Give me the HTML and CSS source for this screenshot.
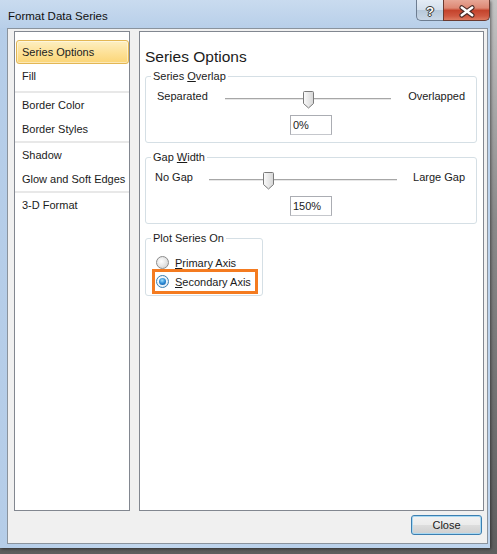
FILE: index.html
```html
<!DOCTYPE html>
<html>
<head>
<meta charset="utf-8">
<title>Format Data Series</title>
<link rel="stylesheet" href="styles.css">
</head>
<body>
<div class="window">
  <div class="titlebar">
    <span class="title">Format Data Series</span>
    <div class="caption-btns">
      <div class="cbtn help"><span class="help-glyph">?</span></div>
      <div class="cbtn close">
        <svg width="47" height="21" viewBox="0 0 47 21">
          <path d="M18.5 8.5 L29.5 16.5 M29.5 8.5 L18.5 16.5" stroke="#4a2b27" stroke-width="5" stroke-linecap="round" fill="none"/>
          <path d="M18.5 8.5 L29.5 16.5 M29.5 8.5 L18.5 16.5" stroke="#ffffff" stroke-width="2.6" stroke-linecap="round" fill="none"/>
        </svg>
      </div>
    </div>
  </div>
  <div class="client">
    <div class="panes">
      <ul class="nav">
        <li class="item active">Series Options</li>
        <li class="item">Fill</li>
        <li class="sep first"></li>
        <li class="item">Border Color</li>
        <li class="item">Border Styles</li>
        <li class="sep"></li>
        <li class="item">Shadow</li>
        <li class="item">Glow and Soft Edges</li>
        <li class="sep"></li>
        <li class="item">3-D Format</li>
      </ul>
      <div class="content">
        <h1 class="heading">Series Options</h1>
        <fieldset class="group">
          <legend>Series <u>O</u>verlap</legend>
          <div class="slider-row overlap">
            <span class="lbl">Separated</span>
            <div class="slider">
              <div class="track"></div>
              <svg class="thumb" style="left: 50%" width="11" height="18" viewBox="0 0 11 18">
                <defs><linearGradient id="tg1" x1="0" y1="0" x2="1" y2="0"><stop offset="0" stop-color="#fbfbfb"/><stop offset="1" stop-color="#d6d6d6"/></linearGradient></defs>
                <path d="M1.5 0.5 H9.5 Q10.5 0.5 10.5 1.5 V12.5 L5.5 17 L0.5 12.5 V1.5 Q0.5 0.5 1.5 0.5 Z" fill="url(#tg1)" stroke="#7a7a7a"/>
              </svg>
            </div>
            <span class="lbl right">Overlapped</span>
          </div>
          <div class="field-row"><div class="textbox">0%</div></div>
        </fieldset>
        <fieldset class="group">
          <legend>Gap <u>W</u>idth</legend>
          <div class="slider-row gap">
            <span class="lbl">No Gap</span>
            <div class="slider">
              <div class="track"></div>
              <svg class="thumb" style="left: 31.4%" width="11" height="18" viewBox="0 0 11 18">
                <defs><linearGradient id="tg2" x1="0" y1="0" x2="1" y2="0"><stop offset="0" stop-color="#fbfbfb"/><stop offset="1" stop-color="#d6d6d6"/></linearGradient></defs>
                <path d="M1.5 0.5 H9.5 Q10.5 0.5 10.5 1.5 V12.5 L5.5 17 L0.5 12.5 V1.5 Q0.5 0.5 1.5 0.5 Z" fill="url(#tg2)" stroke="#7a7a7a"/>
              </svg>
            </div>
            <span class="lbl right">Large Gap</span>
          </div>
          <div class="field-row"><div class="textbox">150%</div></div>
        </fieldset>
        <fieldset class="group plot">
          <legend>Plot Series On</legend>
          <div class="radios">
            <div class="radio-row"><span class="radio"></span><span><u>P</u>rimary Axis</span></div>
            <div class="radio-row marked"><span class="radio checked"><span class="dot"></span></span><span><u>S</u>econdary Axis</span></div>
          </div>
        </fieldset>
      </div>
    </div>
    <div class="buttons"><button class="btn">Close</button></div>
  </div>
</div>
</body>
</html>
```

FILE: styles.css
```css
html, body {
  margin: 0;
  padding: 0;
}
body {
  width: 497px;
  height: 554px;
  overflow: hidden;
  background: linear-gradient(#c4c4c4, #8a8a8a 40%, #5e5e5e);
  font-family: "Liberation Sans", Arial, sans-serif;
  font-size: 11px;
  color: #1b1b1b;
}
.window {
  width: 490px;
  height: 548px;
  box-sizing: border-box;
  padding: 0 2px 4px 7px;
  display: flex;
  flex-direction: column;
  background: linear-gradient(90deg, #b5cde8 0%, #c2d7ee 30%, #b9d0ea 60%, #bfd5ee 100%);
  box-shadow: 1px 1px 3px rgba(0,0,0,0.5);
}
.titlebar {
  height: 28px;
  display: flex;
  justify-content: space-between;
  align-items: flex-start;
  margin-left: -7px;
  margin-right: -2px;
  background: linear-gradient(#c9dbef, #b8cfe9);
}
.title {
  padding: 9px 0 0 8px;
  font-size: 11.5px;
  line-height: 14px;
  color: #111;
}
.caption-btns {
  display: flex;
}
.cbtn {
  height: 21px;
  box-sizing: border-box;
  display: flex;
  align-items: center;
  justify-content: center;
}
.help {
  width: 27px;
  border: 1px solid #6d7d91;
  border-top: none;
  border-right: none;
  border-radius: 0 0 0 5px;
  background: linear-gradient(#e4ecf5, #d3dfec 50%, #b7c8da 52%, #c9d7e6);
}
.help-glyph {
  color: #fff;
  font-weight: bold;
  font-size: 13px;
  line-height: 13px;
  margin-top: 2px;
  text-shadow: 0 0 1px #333, 0 0 1px #333, 0 0 1px #333, 1px 0 0 #444, -1px 0 0 #444, 0 1px 0 #444, 0 -1px 0 #444;
}
.close {
  width: 47px;
  border: 1px solid #6b3a30;
  border-top: none;
  border-radius: 0 0 5px 0;
  background: linear-gradient(#e7a797 0%, #dd8874 40%, #c4432c 52%, #cf5841 80%, #dd7a60 100%);
}
.close svg {
  display: block;
  margin-top: -1px;
}
.client {
  flex: 1;
  display: flex;
  flex-direction: column;
  background: #f0f0f0;
  border: 1px solid #8a939d;
  padding: 2px 3px 8px 6px;
}
.panes {
  height: 480px;
  display: flex;
  gap: 9px;
}
.nav {
  list-style: none;
  margin: 0;
  width: 116px;
  box-sizing: border-box;
  background: #fff;
  border: 1px solid #828790;
  padding: 8px 0 0 1px;
}
.item {
  height: 24px;
  line-height: 24px;
  padding-left: 6px;
  white-space: nowrap;
}
.item.active {
  box-sizing: border-box;
  padding-left: 5px;
  line-height: 22px;
  border: 1px solid #e3b754;
  border-radius: 3px;
  background: linear-gradient(#fdefc2, #fde29a 50%, #fbd576);
  box-shadow: inset 0 0 0 1px rgba(255,255,255,0.45);
}
.sep {
  height: 2px;
  background: #e8e8e8;
  margin-left: -1px;
}
.sep.first {
  margin-top: 3px;
}
.content {
  width: 345px;
  box-sizing: border-box;
  background: #fff;
  border: 1px solid #828790;
  padding: 15px 6px 0 5px;
}
.heading {
  margin: 0;
  font-size: 15.5px;
  font-weight: normal;
  line-height: 20px;
  color: #1b1b1b;
}
.group {
  margin: 2px 0 0 0;
  padding: 0;
  border: 1px solid #d5dfe5;
  border-radius: 3px;
  min-width: 0;
}
.group + .group {
  margin-top: 7px;
}
.group legend {
  margin-left: 5px;
  padding: 0 2px;
  line-height: 14px;
}
.slider-row {
  display: grid;
  height: 20px;
  margin-top: 3px;
  align-items: center;
}
.slider-row.overlap {
  grid-template-columns: 68px 166px 1fr;
  padding: 0 11px 0 11px;
}
.slider-row.gap {
  grid-template-columns: 54px 188px 1fr;
  padding: 0 11px 0 9px;
}
.lbl.right {
  text-align: right;
}
.slider {
  position: relative;
  height: 20px;
  align-self: stretch;
}
.track {
  margin-top: 12px;
  height: 1px;
  background: #a7a7a7;
  border-bottom: 1px solid #e7e7e7;
}
.thumb {
  position: absolute;
  top: 5px;
  margin-left: -5px;
  display: block;
}
.field-row {
  display: flex;
  justify-content: center;
  margin-top: 9px;
  padding-bottom: 7px;
}
.textbox {
  width: 42px;
  height: 20px;
  box-sizing: border-box;
  border: 1px solid #abadb3;
  border-bottom-color: #c5c7cc;
  padding-left: 2px;
  line-height: 18px;
  background: #fff;
}
.group.plot {
  width: 118px;
  box-sizing: border-box;
}
.radios {
  margin-top: 8px;
  padding-bottom: 4px;
  padding-left: 9px;
}
.radio-row {
  display: flex;
  align-items: center;
  gap: 6px;
  height: 19px;
  width: 100px;
  box-sizing: border-box;
  padding-left: 1px;
}
.radio-row.marked {
  outline: 3px solid #f47b20;
}
.radio {
  width: 13px;
  height: 13px;
  box-sizing: border-box;
  border-radius: 50%;
  border: 1px solid #8b8b8b;
  background: radial-gradient(circle at 40% 40%, #ffffff, #e6e6e6 50%, #c9c9c9);
  display: flex;
  align-items: center;
  justify-content: center;
  flex: none;
}
.radio.checked {
  border-color: #3c7fb1;
  background: radial-gradient(circle at 40% 40%, #ffffff, #e8f2fa 60%, #c2d9ee);
}
.dot {
  width: 7px;
  height: 7px;
  border-radius: 50%;
  background: radial-gradient(circle at 45% 35%, #9ee0ff, #2b8ad6 50%, #0f4f96);
}
.buttons {
  display: flex;
  justify-content: flex-end;
  margin-top: 4px;
  padding-right: 2px;
}
.btn {
  width: 71px;
  height: 20px;
  padding: 0;
  font-family: "Liberation Sans", Arial, sans-serif;
  font-size: 11px;
  color: #1b1b1b;
  border: 1px solid #3c7fb1;
  border-radius: 3px;
  background: linear-gradient(#f2f2f2, #ebebeb 50%, #dddddd 51%, #cfcfcf);
  box-shadow: inset 0 0 0 1px #a8d8f2;
}
```
